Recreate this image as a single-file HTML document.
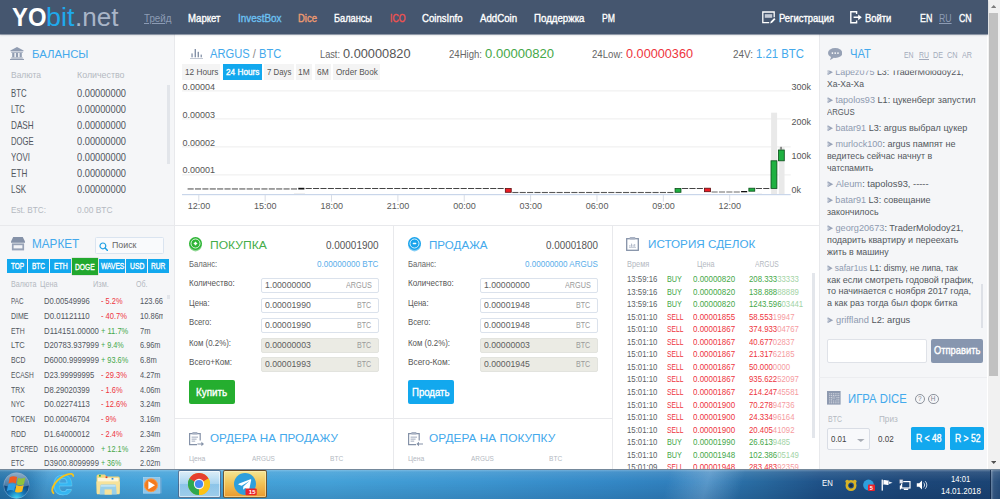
<!DOCTYPE html>
<html lang="ru">
<head>
<meta charset="utf-8">
<title>YObit.net - ARGUS/BTC</title>
<style>
html,body{margin:0;padding:0}
body{width:1000px;height:499px;overflow:hidden;position:relative;background:#fff;font-family:"Liberation Sans",sans-serif}
.t{position:absolute;white-space:nowrap;line-height:1;transform-origin:0 50%;display:block}
.f{opacity:.5}
</style>
</head>
<body>
<header style="position:absolute;left:0;top:0;width:1000px;height:0;z-index:3"><div style="position:absolute;left:0.00px;top:0.00px;width:987.50px;height:34.00px;background:#45566f;box-shadow:0 1px 0 rgba(69,86,111,.5),0 1px 2px rgba(40,50,70,.25);"></div><span class="t" style="left:12.20px;top:5.00px;font-size:25.00px;color:#fff;font-weight:bold;transform:scaleX(0.9522);">YO</span><span class="t" style="left:46.40px;top:5.00px;font-size:25.00px;color:#1fa9ec;transform:scaleX(1.0755);">bit</span><span class="t" style="left:75.20px;top:5.00px;font-size:25.00px;color:#a9b5c8;transform:scaleX(1.0407);">.net</span><nav><span class="t" style="left:143.50px;top:13.00px;font-size:10.60px;color:#8d9cb5;transform:scaleX(0.9239);text-decoration:underline;">Трейд</span><span class="t" style="left:188.00px;top:13.00px;font-size:10.60px;color:#fff;-webkit-text-stroke:.35px #fff;transform:scaleX(0.9059);">Маркет</span><span class="t" style="left:237.50px;top:13.00px;font-size:10.60px;color:#6cc1f3;-webkit-text-stroke:.35px #6cc1f3;transform:scaleX(0.9349);">InvestBox</span><span class="t" style="left:298.00px;top:13.00px;font-size:10.60px;color:#f09b70;-webkit-text-stroke:.35px #f09b70;transform:scaleX(0.8961);">Dice</span><span class="t" style="left:334.00px;top:13.00px;font-size:10.60px;color:#fff;-webkit-text-stroke:.35px #fff;transform:scaleX(0.8698);">Балансы</span><span class="t" style="left:389.50px;top:13.00px;font-size:10.60px;color:#f2524f;-webkit-text-stroke:.35px #f2524f;transform:scaleX(0.8226);">ICO</span><span class="t" style="left:422.00px;top:13.00px;font-size:10.60px;color:#fff;-webkit-text-stroke:.35px #fff;transform:scaleX(0.9047);">CoinsInfo</span><span class="t" style="left:479.50px;top:13.00px;font-size:10.60px;color:#fff;-webkit-text-stroke:.35px #fff;transform:scaleX(0.9104);">AddCoin</span><span class="t" style="left:534.00px;top:13.00px;font-size:10.60px;color:#fff;-webkit-text-stroke:.35px #fff;transform:scaleX(0.9138);">Поддержка</span><span class="t" style="left:601.50px;top:13.00px;font-size:10.60px;color:#fff;-webkit-text-stroke:.35px #fff;transform:scaleX(0.8181);">PM</span></nav><svg style="position:absolute;left:762.00px;top:10.60px;" width="13.60" height="13.20" viewBox="0 0 13.6 13.2"><path d="M12.2 6.2V1H.8v10.6h6.4" fill="none" stroke="#fff" stroke-width="1.3"/><rect x="2.8" y="3.2" width="7.4" height="3.6" fill="#c3cad6"/><path d="M8.2 12.4l.6-2 3.4-3.4 1.3 1.3-3.4 3.4z" fill="#fff"/></svg><span class="t" style="left:778.90px;top:13.00px;font-size:10.60px;color:#fff;-webkit-text-stroke:.35px #fff;transform:scaleX(0.8896);">Регистрация</span><svg style="position:absolute;left:850.40px;top:11.20px;" width="12.00" height="12.60" viewBox="0 0 12 12.6"><path d="M6.6 3V.8H.8v11h5.8V9.6" fill="none" stroke="#fff" stroke-width="1.4"/><path d="M3.6 5.5h4.6V3.4l3.6 2.9-3.6 2.9V7.1H3.6z" fill="#fff"/></svg><span class="t" style="left:865.00px;top:13.00px;font-size:10.60px;color:#fff;-webkit-text-stroke:.35px #fff;transform:scaleX(0.8902);">Войти</span><span class="t" style="left:919.60px;top:13.00px;font-size:10.60px;color:#fff;-webkit-text-stroke:.35px #fff;transform:scaleX(0.8425);">EN</span><span class="t" style="left:939.40px;top:13.00px;font-size:10.60px;color:#8d9cb5;transform:scaleX(0.8229);text-decoration:underline;">RU</span><span class="t" style="left:959.40px;top:13.00px;font-size:10.60px;color:#fff;-webkit-text-stroke:.35px #fff;transform:scaleX(0.8229);">CN</span></header>
<aside><div style="position:absolute;left:0.00px;top:34.20px;width:174.00px;height:436.00px;background:#f5f6f8;border-right:1px solid #e8e9ec;"></div><svg style="position:absolute;left:10.00px;top:47.00px;" width="14.00" height="13.00" viewBox="0 0 14 13"><g fill="#919db2"><path d="M7 0l6.6 3.4v.9H.4v-.9z"/><rect x="1.2" y="4.8" width="11.6" height=".9"/><rect x="2.2" y="6" width="2.2" height="4.2"/><rect x="5.9" y="6" width="2.2" height="4.2"/><rect x="9.6" y="6" width="2.2" height="4.2"/><rect x="1.2" y="10.5" width="11.6" height="1"/><rect x="0" y="11.9" width="14" height="1.1"/></g></svg><section><span class="t" style="left:31.60px;top:48.00px;font-size:11.60px;color:#43a9ec;transform:scaleX(0.9774);">БАЛАНСЫ</span><span class="t" style="left:10.50px;top:71.00px;font-size:9.20px;color:#b4b9c1;transform:scaleX(0.9226);">Валюта</span><span class="t" style="left:76.50px;top:71.00px;font-size:9.20px;color:#b4b9c1;transform:scaleX(0.9626);">Количество</span><span class="t" style="left:10.50px;top:88.00px;font-size:10.60px;color:#52575f;transform:scaleX(0.7316);">BTC</span><span class="t" style="left:76.50px;top:88.00px;font-size:10.60px;color:#52575f;transform:scaleX(0.8752);">0.00000000</span><span class="t" style="left:10.50px;top:104.00px;font-size:10.60px;color:#52575f;transform:scaleX(0.7149);">LTC</span><span class="t" style="left:76.50px;top:104.00px;font-size:10.60px;color:#52575f;transform:scaleX(0.8752);">0.00000000</span><span class="t" style="left:10.50px;top:120.00px;font-size:10.60px;color:#52575f;transform:scaleX(0.7728);">DASH</span><span class="t" style="left:76.50px;top:120.00px;font-size:10.60px;color:#52575f;transform:scaleX(0.8752);">0.00000000</span><span class="t" style="left:10.50px;top:136.00px;font-size:10.60px;color:#52575f;transform:scaleX(0.7291);">DOGE</span><span class="t" style="left:76.50px;top:136.00px;font-size:10.60px;color:#52575f;transform:scaleX(0.8752);">0.00000000</span><span class="t" style="left:10.50px;top:152.00px;font-size:10.60px;color:#52575f;transform:scaleX(0.7502);">YOVI</span><span class="t" style="left:76.50px;top:152.00px;font-size:10.60px;color:#52575f;transform:scaleX(0.8752);">0.00000000</span><span class="t" style="left:10.50px;top:168.00px;font-size:10.60px;color:#52575f;transform:scaleX(0.7670);">ETH</span><span class="t" style="left:76.50px;top:168.00px;font-size:10.60px;color:#52575f;transform:scaleX(0.8752);">0.00000000</span><span class="t" style="left:10.50px;top:184.00px;font-size:10.60px;color:#52575f;transform:scaleX(0.7488);">LSK</span><span class="t" style="left:76.50px;top:184.00px;font-size:10.60px;color:#52575f;transform:scaleX(0.8752);">0.00000000</span><span class="t" style="left:10.50px;top:205.00px;font-size:9.40px;color:#b4b9c1;transform:scaleX(0.8726);">Est. BTC:</span><span class="t" style="left:76.50px;top:205.00px;font-size:9.40px;color:#b4b9c1;transform:scaleX(0.8963);">0.00 BTC</span><div style="position:absolute;left:167.00px;top:84.50px;width:3.00px;height:79.20px;background:#e2e5ea;"></div></section><div style="position:absolute;left:0.00px;top:224.60px;width:174.00px;height:1.00px;background:#e8e9ec;"></div><section><svg style="position:absolute;left:10.50px;top:237.30px;" width="14.00" height="13.40" viewBox="0 0 14 13.4"><path d="M2.2 0h9.6l2.2 4.4v1.4H0V4.4z" fill="#8592a8"/><path d="M.9 6.4h12.2v7H.9z" fill="#97a2b6"/><rect x="2.6" y="8.2" width="8.8" height="3.2" fill="#f3f4f7"/></svg><span class="t" style="left:31.50px;top:239.00px;font-size:11.90px;color:#43a9ec;transform:scaleX(0.9866);">МАРКЕТ</span><div style="position:absolute;left:95.40px;top:237.30px;width:66.40px;height:14.80px;background:#f9fafc;border:1px solid #dae4f0;border-radius:1.5px;"></div><svg style="position:absolute;left:99.00px;top:241.50px;" width="9.40" height="9.40" viewBox="0 0 9.4 9.4"><circle cx="3.9" cy="3.9" r="2.9" fill="none" stroke="#1d9fe3" stroke-width="1.2"/><path d="M6.1 6.1l2.6 2.6" stroke="#1d9fe3" stroke-width="1.5" stroke-linecap="round"/></svg><span class="t" style="left:112.00px;top:241.00px;font-size:9.00px;color:#666;transform:scaleX(0.9818);">Поиск</span><div style="position:absolute;left:6.65px;top:258.90px;width:20.45px;height:14.00px;background:#12a8ee;"></div><span class="t" style="left:10.85px;top:262.00px;font-size:8.50px;color:#fff;-webkit-text-stroke:.35px #fff;transform:scaleX(0.7589);">TOP</span><div style="position:absolute;left:28.00px;top:258.90px;width:21.00px;height:14.00px;background:#12a8ee;"></div><span class="t" style="left:32.40px;top:262.00px;font-size:8.50px;color:#fff;-webkit-text-stroke:.35px #fff;transform:scaleX(0.7529);">BTC</span><div style="position:absolute;left:50.00px;top:258.90px;width:20.90px;height:14.00px;background:#12a8ee;"></div><span class="t" style="left:53.70px;top:262.00px;font-size:8.50px;color:#fff;-webkit-text-stroke:.35px #fff;transform:scaleX(0.8059);">ETH</span><div style="position:absolute;left:98.90px;top:258.90px;width:26.20px;height:14.00px;background:#12a8ee;"></div><span class="t" style="left:100.60px;top:262.00px;font-size:8.50px;color:#fff;-webkit-text-stroke:.35px #fff;transform:scaleX(0.7828);">WAVES</span><div style="position:absolute;left:126.40px;top:258.90px;width:20.60px;height:14.00px;background:#12a8ee;"></div><span class="t" style="left:129.50px;top:262.00px;font-size:8.50px;color:#fff;-webkit-text-stroke:.35px #fff;transform:scaleX(0.8021);">USD</span><div style="position:absolute;left:148.20px;top:258.90px;width:20.70px;height:14.00px;background:#12a8ee;"></div><span class="t" style="left:151.00px;top:262.00px;font-size:8.50px;color:#fff;-webkit-text-stroke:.35px #fff;transform:scaleX(0.7817);">RUR</span><div style="position:absolute;left:71.75px;top:258.40px;width:26.20px;height:16.80px;background:#22a82e;box-shadow:0 0 1px rgba(0,80,0,.5);"></div><span class="t" style="left:75.25px;top:263.00px;font-size:8.50px;color:#fff;-webkit-text-stroke:.35px #fff;transform:scaleX(0.7890);">DOGE</span><span class="t" style="left:10.50px;top:280.00px;font-size:8.30px;color:#b4b9c1;transform:scaleX(0.8651);">Валюта</span><span class="t" style="left:39.90px;top:280.00px;font-size:8.30px;color:#b4b9c1;transform:scaleX(0.8771);">Цена</span><span class="t" style="left:93.10px;top:280.00px;font-size:8.30px;color:#b4b9c1;transform:scaleX(0.8886);">Изм.</span><span class="t" style="left:135.60px;top:280.00px;font-size:8.30px;color:#b4b9c1;transform:scaleX(0.8435);">Об.</span><div style="position:absolute;left:0;top:0;width:162.800px;height:469px;overflow:hidden"><span class="t" style="left:10.50px;top:297.00px;font-size:9.30px;color:#52575f;transform:scaleX(0.6780);">PAC</span><span class="t" style="left:43.75px;top:297.00px;font-size:9.30px;color:#52575f;transform:scaleX(0.8193);">D0.00549996</span><span class="t" style="left:101.00px;top:297.00px;font-size:9.30px;color:#ee3540;transform:scaleX(0.8000);">- 5.2%</span><span class="t" style="left:139.50px;top:297.00px;font-size:9.30px;color:#52575f;transform:scaleX(0.8088);">123.66</span><span class="t" style="left:10.50px;top:312.00px;font-size:9.30px;color:#52575f;transform:scaleX(0.7527);">DIME</span><span class="t" style="left:43.75px;top:312.00px;font-size:9.30px;color:#52575f;transform:scaleX(0.8509);">D0.01121110</span><span class="t" style="left:101.00px;top:312.00px;font-size:9.30px;color:#ee3540;transform:scaleX(0.8113);">- 40.7%</span><span class="t" style="left:139.50px;top:312.00px;font-size:9.30px;color:#52575f;transform:scaleX(0.8093);">10.86m</span><span class="t" style="left:10.50px;top:327.00px;font-size:9.30px;color:#52575f;transform:scaleX(0.7389);">ETH</span><span class="t" style="left:43.75px;top:327.00px;font-size:9.30px;color:#52575f;transform:scaleX(0.8391);">D114151.00000</span><span class="t" style="left:101.00px;top:327.00px;font-size:9.30px;color:#45a848;transform:scaleX(0.8089);">+ 11.7%</span><span class="t" style="left:139.50px;top:327.00px;font-size:9.30px;color:#52575f;transform:scaleX(0.8126);">7m</span><span class="t" style="left:10.50px;top:341.00px;font-size:9.30px;color:#52575f;transform:scaleX(0.8148);">LTC</span><span class="t" style="left:43.75px;top:341.00px;font-size:9.30px;color:#52575f;transform:scaleX(0.8302);">D20783.937999</span><span class="t" style="left:101.00px;top:341.00px;font-size:9.30px;color:#45a848;transform:scaleX(0.7790);">+ 9.4%</span><span class="t" style="left:139.50px;top:341.00px;font-size:9.30px;color:#52575f;transform:scaleX(0.7932);">6.96m</span><span class="t" style="left:10.50px;top:356.00px;font-size:9.30px;color:#52575f;transform:scaleX(0.7383);">BCD</span><span class="t" style="left:43.75px;top:356.00px;font-size:9.30px;color:#52575f;transform:scaleX(0.8302);">D6000.9999999</span><span class="t" style="left:101.00px;top:356.00px;font-size:9.30px;color:#45a848;transform:scaleX(0.7927);">+ 93.6%</span><span class="t" style="left:139.50px;top:356.00px;font-size:9.30px;color:#52575f;transform:scaleX(0.8103);">6.8m</span><span class="t" style="left:10.50px;top:371.00px;font-size:9.30px;color:#52575f;transform:scaleX(0.7102);">ECASH</span><span class="t" style="left:43.75px;top:371.00px;font-size:9.30px;color:#52575f;transform:scaleX(0.8252);">D23.99999995</span><span class="t" style="left:101.00px;top:371.00px;font-size:9.30px;color:#ee3540;transform:scaleX(0.8113);">- 29.3%</span><span class="t" style="left:139.50px;top:371.00px;font-size:9.30px;color:#52575f;transform:scaleX(0.7932);">4.27m</span><span class="t" style="left:10.50px;top:386.00px;font-size:9.30px;color:#52575f;transform:scaleX(0.7389);">TRX</span><span class="t" style="left:43.75px;top:386.00px;font-size:9.30px;color:#52575f;transform:scaleX(0.8193);">D8.29020399</span><span class="t" style="left:101.00px;top:386.00px;font-size:9.30px;color:#ee3540;transform:scaleX(0.8000);">- 1.6%</span><span class="t" style="left:139.50px;top:386.00px;font-size:9.30px;color:#52575f;transform:scaleX(0.7932);">4.06m</span><span class="t" style="left:10.50px;top:400.00px;font-size:9.30px;color:#52575f;transform:scaleX(0.7001);">NYC</span><span class="t" style="left:43.75px;top:400.00px;font-size:9.30px;color:#52575f;transform:scaleX(0.8295);">D0.02274113</span><span class="t" style="left:101.00px;top:400.00px;font-size:9.30px;color:#ee3540;transform:scaleX(0.8113);">- 12.6%</span><span class="t" style="left:139.50px;top:400.00px;font-size:9.30px;color:#52575f;transform:scaleX(0.7932);">3.24m</span><span class="t" style="left:10.50px;top:415.00px;font-size:9.30px;color:#52575f;transform:scaleX(0.7533);">TOKEN</span><span class="t" style="left:43.75px;top:415.00px;font-size:9.30px;color:#52575f;transform:scaleX(0.8193);">D0.00046704</span><span class="t" style="left:101.00px;top:415.00px;font-size:9.30px;color:#ee3540;transform:scaleX(0.7974);">- 9%</span><span class="t" style="left:139.50px;top:415.00px;font-size:9.30px;color:#52575f;transform:scaleX(0.7932);">3.16m</span><span class="t" style="left:10.50px;top:430.00px;font-size:9.30px;color:#52575f;transform:scaleX(0.7442);">RDD</span><span class="t" style="left:43.75px;top:430.00px;font-size:9.30px;color:#52575f;transform:scaleX(0.8193);">D1.64000012</span><span class="t" style="left:101.00px;top:430.00px;font-size:9.30px;color:#ee3540;transform:scaleX(0.8000);">- 2.4%</span><span class="t" style="left:139.50px;top:430.00px;font-size:9.30px;color:#52575f;transform:scaleX(0.7932);">2.34m</span><span class="t" style="left:10.50px;top:445.00px;font-size:9.30px;color:#52575f;transform:scaleX(0.7062);">BTCRED</span><span class="t" style="left:43.75px;top:445.00px;font-size:9.30px;color:#52575f;transform:scaleX(0.8252);">D16.00000000</span><span class="t" style="left:101.00px;top:445.00px;font-size:9.30px;color:#45a848;transform:scaleX(0.7927);">+ 12.1%</span><span class="t" style="left:139.50px;top:445.00px;font-size:9.30px;color:#52575f;transform:scaleX(0.7932);">2.26m</span><span class="t" style="left:10.50px;top:459.00px;font-size:9.30px;color:#52575f;transform:scaleX(0.7120);">ETC</span><span class="t" style="left:43.75px;top:459.00px;font-size:9.30px;color:#52575f;transform:scaleX(0.8302);">D3900.8099999</span><span class="t" style="left:101.00px;top:459.00px;font-size:9.30px;color:#45a848;transform:scaleX(0.7606);">+ 36%</span><span class="t" style="left:139.50px;top:459.00px;font-size:9.30px;color:#52575f;transform:scaleX(0.7932);">2.02m</span></div><div style="position:absolute;left:167.00px;top:294.50px;width:3.00px;height:4.30px;background:#e2e5ea;"></div></section></aside>
<main><section><svg style="position:absolute;left:189.60px;top:48.60px;" width="13.40" height="10.80" viewBox="0 0 13.4 10.8"><g fill="#8592a8"><rect x="1.4" y="4.4" width="1.3" height="3.9"/><rect x="4.6" y="0" width="1.4" height="8.3"/><rect x="7.6" y="2.8" width="1.4" height="5.5"/><rect x="10.6" y="5.6" width="1.3" height="2.7"/><rect x="0" y="9.5" width="13.4" height="1.2"/></g></svg><span class="t" style="left:210.00px;top:49.00px;font-size:11.90px;color:#43a9ec;transform:scaleX(0.9391);"><span style="color:#43a9ec">ARGUS</span> <span style="color:#8f8a88">/</span> <span style="color:#43a9ec">BTC</span></span><span class="t" style="left:320.00px;top:49.00px;font-size:10.60px;color:#666;transform:scaleX(0.8707);">Last:</span><span class="t" style="left:343.00px;top:48.00px;font-size:12.40px;color:#555;transform:scaleX(1.0310);">0.00000820</span><span class="t" style="left:449.00px;top:49.00px;font-size:10.60px;color:#666;transform:scaleX(0.9037);">24High:</span><span class="t" style="left:484.50px;top:48.00px;font-size:12.40px;color:#45a848;transform:scaleX(1.0539);">0.00000820</span><span class="t" style="left:592.00px;top:49.00px;font-size:10.60px;color:#666;transform:scaleX(0.9072);">24Low:</span><span class="t" style="left:626.00px;top:48.00px;font-size:12.40px;color:#ee3540;transform:scaleX(1.0234);">0.00000360</span><span class="t" style="left:732.50px;top:49.00px;font-size:10.60px;color:#666;transform:scaleX(0.9343);">24V:</span><span class="t" style="left:755.50px;top:48.00px;font-size:12.40px;color:#43a9ec;transform:scaleX(0.9170);">1.21 BTC</span><div style="position:absolute;left:182.40px;top:64.00px;width:37.80px;height:15.60px;background:#f4f4f4;"></div><span class="t" style="left:184.80px;top:68.00px;font-size:8.80px;color:#555;transform:scaleX(0.9355);">12 Hours</span><div style="position:absolute;left:223.00px;top:64.00px;width:39.00px;height:15.60px;background:#12a8ee;"></div><span class="t" style="left:226.20px;top:68.00px;font-size:8.80px;color:#fff;-webkit-text-stroke:.35px #fff;transform:scaleX(0.9355);">24 Hours</span><div style="position:absolute;left:264.00px;top:64.00px;width:29.60px;height:15.60px;background:#f4f4f4;"></div><span class="t" style="left:266.60px;top:68.00px;font-size:8.80px;color:#555;transform:scaleX(0.8908);">7 Days</span><div style="position:absolute;left:295.70px;top:64.00px;width:16.50px;height:15.60px;background:#f4f4f4;"></div><span class="t" style="left:298.10px;top:68.00px;font-size:8.80px;color:#555;transform:scaleX(0.9563);">1M</span><div style="position:absolute;left:314.50px;top:64.00px;width:16.50px;height:15.60px;background:#f4f4f4;"></div><span class="t" style="left:316.90px;top:68.00px;font-size:8.80px;color:#555;transform:scaleX(0.9563);">6M</span><div style="position:absolute;left:333.40px;top:64.00px;width:46.60px;height:15.60px;background:#f4f4f4;"></div><span class="t" style="left:335.80px;top:68.00px;font-size:8.80px;color:#555;transform:scaleX(0.9292);">Order Book</span><svg style="position:absolute;left:180.00px;top:84.00px;" width="615.00" height="120.00" viewBox="0 0 615 120"><rect x="2.00" y="6.40" width="608.70" height="1" fill="#ededed"/><rect x="2.00" y="34.40" width="608.70" height="1" fill="#ededed"/><rect x="2.00" y="62.40" width="608.70" height="1" fill="#ededed"/><rect x="2.00" y="90.40" width="608.70" height="1" fill="#ededed"/><rect x="591.10" y="28.70" width="6" height="81.80" fill="#e9e9e9"/><rect x="598.75" y="63.30" width="5.8" height="47.20" fill="#e9e9e9"/><rect x="114.00" y="109.00" width="11" height="1.4" fill="#eeeeee"/><rect x="577.00" y="109.40" width="5" height="1" fill="#eeeeee"/><rect x="2.00" y="110.00" width="608.70" height="1.2" fill="#c9d6ea"/><rect x="18.30" y="111.00" width="1" height="6.6" fill="#d8dde6"/><rect x="84.66" y="111.00" width="1" height="6.6" fill="#d8dde6"/><rect x="151.02" y="111.00" width="1" height="6.6" fill="#d8dde6"/><rect x="217.38" y="111.00" width="1" height="6.6" fill="#d8dde6"/><rect x="283.74" y="111.00" width="1" height="6.6" fill="#d8dde6"/><rect x="350.10" y="111.00" width="1" height="6.6" fill="#d8dde6"/><rect x="416.46" y="111.00" width="1" height="6.6" fill="#d8dde6"/><rect x="482.82" y="111.00" width="1" height="6.6" fill="#d8dde6"/><rect x="549.18" y="111.00" width="1" height="6.6" fill="#d8dde6"/><rect x="317.54" y="104.00" width="6.10" height="1" fill="#444"/><rect x="310.16" y="104.00" width="6.10" height="1" fill="#444"/><rect x="302.78" y="104.00" width="6.10" height="1" fill="#444"/><rect x="295.40" y="104.00" width="6.10" height="1" fill="#444"/><rect x="288.02" y="104.00" width="6.10" height="1" fill="#444"/><rect x="280.64" y="104.00" width="6.10" height="1" fill="#444"/><rect x="273.26" y="104.00" width="6.10" height="1" fill="#444"/><rect x="265.88" y="104.00" width="6.10" height="1" fill="#444"/><rect x="258.50" y="104.00" width="6.10" height="1" fill="#444"/><rect x="251.12" y="104.00" width="6.10" height="1" fill="#444"/><rect x="243.74" y="104.00" width="6.10" height="1" fill="#444"/><rect x="236.36" y="104.00" width="6.10" height="1" fill="#444"/><rect x="228.98" y="104.00" width="6.10" height="1" fill="#444"/><rect x="221.60" y="104.00" width="6.10" height="1" fill="#444"/><rect x="214.22" y="104.00" width="6.10" height="1" fill="#444"/><rect x="206.84" y="104.00" width="6.10" height="1" fill="#444"/><rect x="199.46" y="104.00" width="6.10" height="1" fill="#444"/><rect x="192.08" y="104.00" width="6.10" height="1" fill="#444"/><rect x="184.70" y="104.00" width="6.10" height="1" fill="#444"/><rect x="177.32" y="104.00" width="6.10" height="1" fill="#444"/><rect x="169.94" y="104.00" width="6.10" height="1" fill="#444"/><rect x="162.56" y="104.00" width="6.10" height="1" fill="#444"/><rect x="155.18" y="104.00" width="6.10" height="1" fill="#444"/><rect x="147.80" y="104.00" width="6.10" height="1" fill="#444"/><rect x="140.42" y="104.00" width="6.10" height="1" fill="#444"/><rect x="133.04" y="104.00" width="6.10" height="1" fill="#444"/><rect x="125.66" y="104.00" width="6.10" height="1" fill="#444"/><rect x="110.90" y="104.40" width="6.10" height="1.1" fill="#585858"/><rect x="103.52" y="104.40" width="6.10" height="1.1" fill="#585858"/><rect x="96.14" y="104.40" width="6.10" height="1.1" fill="#585858"/><rect x="88.76" y="104.40" width="6.10" height="1.1" fill="#585858"/><rect x="81.38" y="104.40" width="6.10" height="1.1" fill="#585858"/><rect x="74.00" y="104.40" width="6.10" height="1.1" fill="#585858"/><rect x="66.62" y="104.40" width="6.10" height="1.1" fill="#585858"/><rect x="59.24" y="104.40" width="6.10" height="1.1" fill="#585858"/><rect x="51.86" y="104.40" width="6.10" height="1.1" fill="#585858"/><rect x="44.48" y="104.40" width="6.10" height="1.1" fill="#585858"/><rect x="37.10" y="104.40" width="6.10" height="1.1" fill="#585858"/><rect x="29.72" y="104.40" width="6.10" height="1.1" fill="#585858"/><rect x="22.34" y="104.40" width="6.10" height="1.1" fill="#585858"/><rect x="14.96" y="104.40" width="6.10" height="1.1" fill="#585858"/><rect x="7.58" y="104.40" width="6.10" height="1.1" fill="#585858"/><rect x="118.28" y="103.80" width="6.1" height="1.7" fill="#111"/><rect x="325.32" y="104.50" width="5.90" height="3.80" fill="#ee1c25" stroke="#5a0d10" stroke-width=".8"/><rect x="487.28" y="107.95" width="6.10" height="1.1" fill="#585858"/><rect x="479.90" y="107.95" width="6.10" height="1.1" fill="#585858"/><rect x="472.52" y="107.95" width="6.10" height="1.1" fill="#585858"/><rect x="465.14" y="107.95" width="6.10" height="1.1" fill="#585858"/><rect x="457.76" y="107.95" width="6.10" height="1.1" fill="#585858"/><rect x="450.38" y="107.95" width="6.10" height="1.1" fill="#585858"/><rect x="443.00" y="107.95" width="6.10" height="1.1" fill="#585858"/><rect x="435.62" y="107.95" width="6.10" height="1.1" fill="#585858"/><rect x="428.24" y="107.95" width="6.10" height="1.1" fill="#585858"/><rect x="420.86" y="107.95" width="6.10" height="1.1" fill="#585858"/><rect x="413.48" y="107.95" width="6.10" height="1.1" fill="#585858"/><rect x="406.10" y="107.95" width="6.10" height="1.1" fill="#585858"/><rect x="398.72" y="107.95" width="6.10" height="1.1" fill="#585858"/><rect x="391.34" y="107.95" width="6.10" height="1.1" fill="#585858"/><rect x="383.96" y="107.95" width="6.10" height="1.1" fill="#585858"/><rect x="376.58" y="107.95" width="6.10" height="1.1" fill="#585858"/><rect x="369.20" y="107.95" width="6.10" height="1.1" fill="#585858"/><rect x="361.82" y="107.95" width="6.10" height="1.1" fill="#585858"/><rect x="354.44" y="107.95" width="6.10" height="1.1" fill="#585858"/><rect x="347.06" y="107.95" width="6.10" height="1.1" fill="#585858"/><rect x="339.68" y="107.95" width="6.10" height="1.1" fill="#585858"/><rect x="332.30" y="107.95" width="6.10" height="1.1" fill="#585858"/><rect x="495.06" y="104.50" width="5.90" height="3.80" fill="#1fb141" stroke="#0b4d1a" stroke-width=".8"/><rect x="516.80" y="104.00" width="6.10" height="1" fill="#444"/><rect x="509.42" y="104.00" width="6.10" height="1" fill="#444"/><rect x="502.04" y="104.00" width="6.10" height="1" fill="#444"/><rect x="524.58" y="104.20" width="5.90" height="3.50" fill="#ee1c25" stroke="#5a0d10" stroke-width=".8"/><rect x="553.70" y="107.45" width="6.10" height="1.1" fill="#777"/><rect x="546.32" y="107.45" width="6.10" height="1.1" fill="#777"/><rect x="538.94" y="107.45" width="6.10" height="1.1" fill="#777"/><rect x="531.56" y="107.45" width="6.10" height="1.1" fill="#777"/><rect x="561.08" y="107.00" width="6.1" height="1.3" fill="#111"/><rect x="568.86" y="104.20" width="5.90" height="3.00" fill="#1fb141" stroke="#0b4d1a" stroke-width=".8"/><rect x="583.22" y="104.00" width="6.10" height="1" fill="#444"/><rect x="575.84" y="104.00" width="6.10" height="1" fill="#444"/><rect x="591.00" y="76.80" width="5.90" height="27.60" fill="#1fb141" stroke="#0b4d1a" stroke-width=".8"/><rect x="600.53" y="62.80" width="1" height="2.80" fill="#333"/><rect x="598.38" y="66.00" width="5.90" height="10.80" fill="#1fb141" stroke="#0b4d1a" stroke-width=".8"/></svg><span class="t" style="left:182.50px;top:83.00px;font-size:9.00px;color:#555;">0.00004</span><span class="t" style="left:182.50px;top:111.00px;font-size:9.00px;color:#555;">0.00003</span><span class="t" style="left:182.50px;top:139.00px;font-size:9.00px;color:#555;">0.00002</span><span class="t" style="left:182.50px;top:166.00px;font-size:9.00px;color:#555;">0.00001</span><span class="t" style="left:791.50px;top:83.00px;font-size:9.00px;color:#555;">300k</span><span class="t" style="left:791.50px;top:118.00px;font-size:9.00px;color:#555;">200k</span><span class="t" style="left:791.50px;top:152.00px;font-size:9.00px;color:#555;">100k</span><span class="t" style="left:791.50px;top:186.00px;font-size:9.00px;color:#555;">0k</span><span class="t" style="left:187.70px;top:202.00px;font-size:9.00px;color:#5a5a5a;">12:00</span><span class="t" style="left:254.06px;top:202.00px;font-size:9.00px;color:#5a5a5a;">15:00</span><span class="t" style="left:320.42px;top:202.00px;font-size:9.00px;color:#5a5a5a;">18:00</span><span class="t" style="left:386.78px;top:202.00px;font-size:9.00px;color:#5a5a5a;">21:00</span><span class="t" style="left:453.14px;top:202.00px;font-size:9.00px;color:#5a5a5a;">00:00</span><span class="t" style="left:519.50px;top:202.00px;font-size:9.00px;color:#5a5a5a;">03:00</span><span class="t" style="left:585.86px;top:202.00px;font-size:9.00px;color:#5a5a5a;">06:00</span><span class="t" style="left:652.22px;top:202.00px;font-size:9.00px;color:#5a5a5a;">09:00</span><span class="t" style="left:718.58px;top:202.00px;font-size:9.00px;color:#5a5a5a;">12:00</span></section><div style="position:absolute;left:174.50px;top:224.60px;width:645.00px;height:1.00px;background:#e8e9ec;"></div>
<div style="position:absolute;left:392.50px;top:224.50px;width:1.00px;height:246.00px;background:#e8e9ec;"></div><div style="position:absolute;left:612.00px;top:224.50px;width:1.00px;height:246.00px;background:#e8e9ec;"></div><div style="position:absolute;left:174.50px;top:418.30px;width:438.00px;height:1.00px;background:#e8e9ec;"></div><section><svg style="position:absolute;left:188.80px;top:237.00px;" width="13.00" height="15.00" viewBox="0 0 13 15"><ellipse cx="6.5" cy="8.2" rx="6.2" ry="6.2" fill="#2fb536" opacity=".55"/><circle cx="6.5" cy="6.5" r="6.5" fill="#2fb536"/><circle cx="6.5" cy="6.5" r="4.5" fill="none" stroke="#fff" stroke-width=".9" opacity=".9"/><rect x="4.7" y="5.8" width="3.6" height="1.4" rx=".4" fill="#fff"/><rect x="5.8" y="4.7" width="1.4" height="3.6" rx=".4" fill="#fff"/></svg><span class="t" style="left:210.00px;top:240.00px;font-size:11.80px;color:#45ad49;transform:scaleX(1.0257);">ПОКУПКА</span><span class="t" style="left:326.25px;top:241.00px;font-size:10.40px;color:#555;transform:scaleX(0.9562);">0.00001900</span><span class="t" style="left:316.75px;top:260.00px;font-size:9.00px;color:#5aaeea;transform:scaleX(0.9036);">0.00000000 BTC</span><span class="t" style="left:189.25px;top:260.00px;font-size:9.00px;color:#666;transform:scaleX(0.8524);">Баланс:</span><span class="t" style="left:189.25px;top:279.00px;font-size:9.00px;color:#555;transform:scaleX(0.8998);">Количество:</span><div style="position:absolute;left:261.25px;top:277.50px;width:115.50px;height:13.20px;background:#fff;border:1px solid #dbe2ec;border-radius:2px;"></div><span class="t" style="left:265.00px;top:280.00px;font-size:9.60px;color:#5e5e5e;transform:scaleX(0.9036);">1.00000000</span><span class="t" style="left:345.50px;top:281.00px;font-size:8.60px;color:#9a9a9a;transform:scaleX(0.8425);">ARGUS</span><span class="t" style="left:189.25px;top:299.00px;font-size:9.00px;color:#555;transform:scaleX(0.8492);">Цена:</span><div style="position:absolute;left:261.25px;top:297.50px;width:115.50px;height:13.20px;background:#fff;border:1px solid #dbe2ec;border-radius:2px;"></div><span class="t" style="left:265.00px;top:300.00px;font-size:9.60px;color:#5e5e5e;transform:scaleX(0.9036);">0.00001990</span><span class="t" style="left:357.00px;top:301.00px;font-size:8.60px;color:#9a9a9a;transform:scaleX(0.8291);">BTC</span><span class="t" style="left:189.25px;top:318.00px;font-size:9.00px;color:#555;transform:scaleX(0.8618);">Всего:</span><div style="position:absolute;left:261.25px;top:317.50px;width:115.50px;height:13.20px;background:#fff;border:1px solid #dbe2ec;border-radius:2px;"></div><span class="t" style="left:265.00px;top:320.00px;font-size:9.60px;color:#5e5e5e;transform:scaleX(0.9036);">0.00001990</span><span class="t" style="left:357.00px;top:321.00px;font-size:8.60px;color:#9a9a9a;transform:scaleX(0.8291);">BTC</span><span class="t" style="left:189.25px;top:339.00px;font-size:9.00px;color:#555;transform:scaleX(0.8759);">Ком (0.2%):</span><div style="position:absolute;left:261.25px;top:337.50px;width:115.50px;height:13.20px;background:#ebebe4;border:1px solid #e2e3de;border-radius:2px;"></div><span class="t" style="left:265.00px;top:340.00px;font-size:9.60px;color:#5e5e5e;transform:scaleX(0.9036);">0.00000003</span><span class="t" style="left:357.00px;top:341.00px;font-size:8.60px;color:#9a9a9a;transform:scaleX(0.8291);">BTC</span><span class="t" style="left:189.25px;top:358.00px;font-size:9.00px;color:#555;transform:scaleX(0.8996);">Всего+Ком:</span><div style="position:absolute;left:261.25px;top:357.20px;width:115.50px;height:13.20px;background:#ebebe4;border:1px solid #e2e3de;border-radius:2px;"></div><span class="t" style="left:265.00px;top:359.00px;font-size:9.60px;color:#5e5e5e;transform:scaleX(0.9036);">0.00001993</span><span class="t" style="left:357.00px;top:360.00px;font-size:8.60px;color:#9a9a9a;transform:scaleX(0.8291);">BTC</span><div style="position:absolute;left:188.75px;top:380.00px;width:46.20px;height:23.80px;background:#25ae2f;border-radius:2px;"></div><span class="t" style="left:195.75px;top:388.00px;font-size:10.40px;color:#fff;-webkit-text-stroke:.35px #fff;transform:scaleX(0.9510);">Купить</span><svg style="position:absolute;left:189.00px;top:432.20px;" width="15.00" height="14.40" viewBox="0 0 15 14.4"><g fill="none" stroke="#8592a8" stroke-width="1.2"><path d="M8 12.6H.6V1.6h10.6v7"/></g><rect x="3.4" y="0" width="5" height="2.6" rx=".6" fill="#a9b2c3"/><g fill="#a9b2c3"><rect x="2.6" y="4.6" width="6.4" height="1.1"/><rect x="2.6" y="6.6" width="5" height="1.1"/><rect x="2.6" y="8.6" width="3.6" height="1.1"/></g><path d="M8.4 11.4h4v-1.7l2.6 2.3-2.6 2.3v-1.7h-4z" fill="#8592a8"/></svg><span class="t" style="left:210.00px;top:433.00px;font-size:11.80px;color:#43a9ec;transform:scaleX(0.9883);">ОРДЕРА НА ПРОДАЖУ</span><span class="t" style="left:189.40px;top:455.00px;font-size:8.00px;color:#b4b9c1;transform:scaleX(0.8526);">Цена</span><span class="t" style="left:252.00px;top:455.00px;font-size:8.00px;color:#b4b9c1;transform:scaleX(0.8013);">ARGUS</span><span class="t" style="left:330.00px;top:455.00px;font-size:8.00px;color:#b4b9c1;transform:scaleX(0.8250);">BTC</span></section><section><svg style="position:absolute;left:407.80px;top:237.00px;" width="13.00" height="15.00" viewBox="0 0 13 15"><ellipse cx="6.5" cy="8.2" rx="6.2" ry="6.2" fill="#1ba4ec" opacity=".55"/><circle cx="6.5" cy="6.5" r="6.5" fill="#1ba4ec"/><circle cx="6.5" cy="6.5" r="4.5" fill="none" stroke="#fff" stroke-width=".9" opacity=".9"/><rect x="4.7" y="5.8" width="3.6" height="1.4" rx=".4" fill="#fff"/></svg><span class="t" style="left:429.20px;top:240.00px;font-size:11.80px;color:#43a9ec;transform:scaleX(0.9828);">ПРОДАЖА</span><span class="t" style="left:545.50px;top:241.00px;font-size:10.40px;color:#555;transform:scaleX(0.9471);">0.00001800</span><span class="t" style="left:524.50px;top:260.00px;font-size:9.00px;color:#5aaeea;transform:scaleX(0.8950);">0.00000000 ARGUS</span><span class="t" style="left:408.25px;top:260.00px;font-size:9.00px;color:#666;transform:scaleX(0.8524);">Баланс:</span><span class="t" style="left:408.25px;top:279.00px;font-size:9.00px;color:#555;transform:scaleX(0.8998);">Количество:</span><div style="position:absolute;left:480.25px;top:277.50px;width:115.50px;height:13.20px;background:#fff;border:1px solid #dbe2ec;border-radius:2px;"></div><span class="t" style="left:484.00px;top:280.00px;font-size:9.60px;color:#5e5e5e;transform:scaleX(0.9036);">1.00000000</span><span class="t" style="left:564.50px;top:281.00px;font-size:8.60px;color:#9a9a9a;transform:scaleX(0.8425);">ARGUS</span><span class="t" style="left:408.25px;top:299.00px;font-size:9.00px;color:#555;transform:scaleX(0.8492);">Цена:</span><div style="position:absolute;left:480.25px;top:297.50px;width:115.50px;height:13.20px;background:#fff;border:1px solid #dbe2ec;border-radius:2px;"></div><span class="t" style="left:484.00px;top:300.00px;font-size:9.60px;color:#5e5e5e;transform:scaleX(0.9036);">0.00001948</span><span class="t" style="left:576.00px;top:301.00px;font-size:8.60px;color:#9a9a9a;transform:scaleX(0.8291);">BTC</span><span class="t" style="left:408.25px;top:318.00px;font-size:9.00px;color:#555;transform:scaleX(0.8618);">Всего:</span><div style="position:absolute;left:480.25px;top:317.50px;width:115.50px;height:13.20px;background:#fff;border:1px solid #dbe2ec;border-radius:2px;"></div><span class="t" style="left:484.00px;top:320.00px;font-size:9.60px;color:#5e5e5e;transform:scaleX(0.9036);">0.00001948</span><span class="t" style="left:576.00px;top:321.00px;font-size:8.60px;color:#9a9a9a;transform:scaleX(0.8291);">BTC</span><span class="t" style="left:408.25px;top:339.00px;font-size:9.00px;color:#555;transform:scaleX(0.8759);">Ком (0.2%):</span><div style="position:absolute;left:480.25px;top:337.50px;width:115.50px;height:13.20px;background:#ebebe4;border:1px solid #e2e3de;border-radius:2px;"></div><span class="t" style="left:484.00px;top:340.00px;font-size:9.60px;color:#5e5e5e;transform:scaleX(0.9036);">0.00000003</span><span class="t" style="left:576.00px;top:341.00px;font-size:8.60px;color:#9a9a9a;transform:scaleX(0.8291);">BTC</span><span class="t" style="left:408.25px;top:358.00px;font-size:9.00px;color:#555;transform:scaleX(0.9221);">Всего-Ком:</span><div style="position:absolute;left:480.25px;top:357.20px;width:115.50px;height:13.20px;background:#ebebe4;border:1px solid #e2e3de;border-radius:2px;"></div><span class="t" style="left:484.00px;top:359.00px;font-size:9.60px;color:#5e5e5e;transform:scaleX(0.9036);">0.00001945</span><span class="t" style="left:576.00px;top:360.00px;font-size:8.60px;color:#9a9a9a;transform:scaleX(0.8291);">BTC</span><div style="position:absolute;left:407.75px;top:380.00px;width:46.20px;height:23.80px;background:#12a8ee;border-radius:2px;"></div><span class="t" style="left:412.40px;top:388.00px;font-size:10.40px;color:#fff;-webkit-text-stroke:.35px #fff;transform:scaleX(0.9238);">Продать</span><svg style="position:absolute;left:408.00px;top:432.20px;" width="15.00" height="14.40" viewBox="0 0 15 14.4"><g fill="none" stroke="#8592a8" stroke-width="1.2"><path d="M8 12.6H.6V1.6h10.6v7"/></g><rect x="3.4" y="0" width="5" height="2.6" rx=".6" fill="#a9b2c3"/><g fill="#a9b2c3"><rect x="2.6" y="4.6" width="6.4" height="1.1"/><rect x="2.6" y="6.6" width="5" height="1.1"/><rect x="2.6" y="8.6" width="3.6" height="1.1"/></g><path d="M15 11.4h-4v-1.7L8.4 12l2.6 2.3v-1.7h4z" fill="#8592a8"/></svg><span class="t" style="left:429.00px;top:433.00px;font-size:11.80px;color:#43a9ec;transform:scaleX(1.0085);">ОРДЕРА НА ПОКУПКУ</span><span class="t" style="left:408.40px;top:455.00px;font-size:8.00px;color:#b4b9c1;transform:scaleX(0.8526);">Цена</span><span class="t" style="left:471.00px;top:455.00px;font-size:8.00px;color:#b4b9c1;transform:scaleX(0.8013);">ARGUS</span><span class="t" style="left:549.00px;top:455.00px;font-size:8.00px;color:#b4b9c1;transform:scaleX(0.8250);">BTC</span></section><section><svg style="position:absolute;left:626.20px;top:236.80px;" width="13.00" height="14.00" viewBox="0 0 13 14"><rect x=".7" y="1.7" width="11.6" height="11.6" fill="none" stroke="#8592a8" stroke-width="1.3"/><rect x="3.6" y="0" width="5.8" height="2.4" rx=".8" fill="#a9b2c3"/><g fill="#b4bccb"><rect x="3.4" y="8" width="1" height="1.8"/><rect x="5" y="6.6" width="1" height="3.2"/><rect x="6.6" y="7.6" width="1" height="2.2"/><rect x="8.2" y="7" width="1" height="2.8"/><rect x="3" y="10.2" width="7" height=".7"/></g></svg><span class="t" style="left:648.00px;top:239.00px;font-size:11.80px;color:#43a9ec;transform:scaleX(0.9897);">ИСТОРИЯ СДЕЛОК</span><span class="t" style="left:627.00px;top:260.00px;font-size:8.30px;color:#b4b9c1;transform:scaleX(0.8891);">Время</span><span class="t" style="left:697.20px;top:260.00px;font-size:8.30px;color:#b4b9c1;transform:scaleX(0.8771);">Цена</span><span class="t" style="left:755.40px;top:260.00px;font-size:8.30px;color:#b4b9c1;transform:scaleX(0.8064);">ARGUS</span><span class="t" style="left:626.80px;top:275.00px;font-size:8.80px;color:#5c5f66;transform:scaleX(0.8847);">13:59:16</span><span class="t" style="left:666.70px;top:275.00px;font-size:8.80px;color:#45a848;transform:scaleX(0.8180);">BUY</span><span class="t" style="left:693.20px;top:275.00px;font-size:8.80px;color:#45a848;transform:scaleX(0.9057);">0.00000820</span><span class="t" style="left:748.90px;top:275.00px;font-size:8.80px;color:#45a848;transform:scaleX(0.8848);">208.333<span class="f">33333</span></span><span class="t" style="left:626.80px;top:288.00px;font-size:8.80px;color:#5c5f66;transform:scaleX(0.8847);">13:59:16</span><span class="t" style="left:666.70px;top:288.00px;font-size:8.80px;color:#45a848;transform:scaleX(0.8180);">BUY</span><span class="t" style="left:693.20px;top:288.00px;font-size:8.80px;color:#45a848;transform:scaleX(0.9057);">0.00000820</span><span class="t" style="left:748.90px;top:288.00px;font-size:8.80px;color:#45a848;transform:scaleX(0.8848);">138.888<span class="f">88889</span></span><span class="t" style="left:626.80px;top:300.00px;font-size:8.80px;color:#5c5f66;transform:scaleX(0.8847);">13:59:16</span><span class="t" style="left:666.70px;top:300.00px;font-size:8.80px;color:#45a848;transform:scaleX(0.8180);">BUY</span><span class="t" style="left:693.20px;top:300.00px;font-size:8.80px;color:#45a848;transform:scaleX(0.9057);">0.00000820</span><span class="t" style="left:748.90px;top:300.00px;font-size:8.80px;color:#45a848;transform:scaleX(0.8849);">1243.596<span class="f">03441</span></span><span class="t" style="left:626.80px;top:313.00px;font-size:8.80px;color:#5c5f66;transform:scaleX(0.8847);">15:01:10</span><span class="t" style="left:666.70px;top:313.00px;font-size:8.80px;color:#ee3540;transform:scaleX(0.7663);">SELL</span><span class="t" style="left:693.20px;top:313.00px;font-size:8.80px;color:#ee3540;transform:scaleX(0.9057);">0.00001855</span><span class="t" style="left:748.90px;top:313.00px;font-size:8.80px;color:#ee3540;transform:scaleX(0.8851);">58.553<span class="f">19947</span></span><span class="t" style="left:626.80px;top:325.00px;font-size:8.80px;color:#5c5f66;transform:scaleX(0.8847);">15:01:10</span><span class="t" style="left:666.70px;top:325.00px;font-size:8.80px;color:#ee3540;transform:scaleX(0.7663);">SELL</span><span class="t" style="left:693.20px;top:325.00px;font-size:8.80px;color:#ee3540;transform:scaleX(0.9057);">0.00001867</span><span class="t" style="left:748.90px;top:325.00px;font-size:8.80px;color:#ee3540;transform:scaleX(0.8848);">374.933<span class="f">04767</span></span><span class="t" style="left:626.80px;top:338.00px;font-size:8.80px;color:#5c5f66;transform:scaleX(0.8847);">15:01:10</span><span class="t" style="left:666.70px;top:338.00px;font-size:8.80px;color:#ee3540;transform:scaleX(0.7663);">SELL</span><span class="t" style="left:693.20px;top:338.00px;font-size:8.80px;color:#ee3540;transform:scaleX(0.9057);">0.00001867</span><span class="t" style="left:748.90px;top:338.00px;font-size:8.80px;color:#ee3540;transform:scaleX(0.8851);">40.677<span class="f">02837</span></span><span class="t" style="left:626.80px;top:350.00px;font-size:8.80px;color:#5c5f66;transform:scaleX(0.8847);">15:01:10</span><span class="t" style="left:666.70px;top:350.00px;font-size:8.80px;color:#ee3540;transform:scaleX(0.7663);">SELL</span><span class="t" style="left:693.20px;top:350.00px;font-size:8.80px;color:#ee3540;transform:scaleX(0.9057);">0.00001867</span><span class="t" style="left:748.90px;top:350.00px;font-size:8.80px;color:#ee3540;transform:scaleX(0.8851);">21.317<span class="f">62185</span></span><span class="t" style="left:626.80px;top:363.00px;font-size:8.80px;color:#5c5f66;transform:scaleX(0.8847);">15:01:10</span><span class="t" style="left:666.70px;top:363.00px;font-size:8.80px;color:#ee3540;transform:scaleX(0.7663);">SELL</span><span class="t" style="left:693.20px;top:363.00px;font-size:8.80px;color:#ee3540;transform:scaleX(0.9057);">0.00001867</span><span class="t" style="left:748.90px;top:363.00px;font-size:8.80px;color:#ee3540;transform:scaleX(0.8850);">50.000<span class="f">0000</span></span><span class="t" style="left:626.80px;top:375.00px;font-size:8.80px;color:#5c5f66;transform:scaleX(0.8847);">15:01:10</span><span class="t" style="left:666.70px;top:375.00px;font-size:8.80px;color:#ee3540;transform:scaleX(0.7663);">SELL</span><span class="t" style="left:693.20px;top:375.00px;font-size:8.80px;color:#ee3540;transform:scaleX(0.9057);">0.00001867</span><span class="t" style="left:748.90px;top:375.00px;font-size:8.80px;color:#ee3540;transform:scaleX(0.8848);">935.622<span class="f">52097</span></span><span class="t" style="left:626.80px;top:388.00px;font-size:8.80px;color:#5c5f66;transform:scaleX(0.8847);">15:01:10</span><span class="t" style="left:666.70px;top:388.00px;font-size:8.80px;color:#ee3540;transform:scaleX(0.7663);">SELL</span><span class="t" style="left:693.20px;top:388.00px;font-size:8.80px;color:#ee3540;transform:scaleX(0.9057);">0.00001867</span><span class="t" style="left:748.90px;top:388.00px;font-size:8.80px;color:#ee3540;transform:scaleX(0.8848);">214.247<span class="f">45581</span></span><span class="t" style="left:626.80px;top:401.00px;font-size:8.80px;color:#5c5f66;transform:scaleX(0.8847);">15:01:10</span><span class="t" style="left:666.70px;top:401.00px;font-size:8.80px;color:#ee3540;transform:scaleX(0.7663);">SELL</span><span class="t" style="left:693.20px;top:401.00px;font-size:8.80px;color:#ee3540;transform:scaleX(0.9057);">0.00001900</span><span class="t" style="left:748.90px;top:401.00px;font-size:8.80px;color:#ee3540;transform:scaleX(0.8851);">70.278<span class="f">94736</span></span><span class="t" style="left:626.80px;top:413.00px;font-size:8.80px;color:#5c5f66;transform:scaleX(0.8847);">15:01:10</span><span class="t" style="left:666.70px;top:413.00px;font-size:8.80px;color:#ee3540;transform:scaleX(0.7663);">SELL</span><span class="t" style="left:693.20px;top:413.00px;font-size:8.80px;color:#ee3540;transform:scaleX(0.9057);">0.00001900</span><span class="t" style="left:748.90px;top:413.00px;font-size:8.80px;color:#ee3540;transform:scaleX(0.8851);">24.334<span class="f">96164</span></span><span class="t" style="left:626.80px;top:426.00px;font-size:8.80px;color:#5c5f66;transform:scaleX(0.8847);">15:01:10</span><span class="t" style="left:666.70px;top:426.00px;font-size:8.80px;color:#ee3540;transform:scaleX(0.7663);">SELL</span><span class="t" style="left:693.20px;top:426.00px;font-size:8.80px;color:#ee3540;transform:scaleX(0.9057);">0.00001900</span><span class="t" style="left:748.90px;top:426.00px;font-size:8.80px;color:#ee3540;transform:scaleX(0.8851);">20.405<span class="f">41092</span></span><span class="t" style="left:626.80px;top:438.00px;font-size:8.80px;color:#5c5f66;transform:scaleX(0.8847);">15:01:10</span><span class="t" style="left:666.70px;top:438.00px;font-size:8.80px;color:#45a848;transform:scaleX(0.8180);">BUY</span><span class="t" style="left:693.20px;top:438.00px;font-size:8.80px;color:#45a848;transform:scaleX(0.9057);">0.00001990</span><span class="t" style="left:748.90px;top:438.00px;font-size:8.80px;color:#45a848;transform:scaleX(0.8850);">26.613<span class="f">9485</span></span><span class="t" style="left:626.80px;top:451.00px;font-size:8.80px;color:#5c5f66;transform:scaleX(0.8847);">15:01:10</span><span class="t" style="left:666.70px;top:451.00px;font-size:8.80px;color:#45a848;transform:scaleX(0.8180);">BUY</span><span class="t" style="left:693.20px;top:451.00px;font-size:8.80px;color:#45a848;transform:scaleX(0.9057);">0.00001948</span><span class="t" style="left:748.90px;top:451.00px;font-size:8.80px;color:#45a848;transform:scaleX(0.8848);">102.386<span class="f">05149</span></span><span class="t" style="left:626.80px;top:463.00px;font-size:8.80px;color:#5c5f66;transform:scaleX(0.8847);">15:01:09</span><span class="t" style="left:666.70px;top:463.00px;font-size:8.80px;color:#ee3540;transform:scaleX(0.7663);">SELL</span><span class="t" style="left:693.20px;top:463.00px;font-size:8.80px;color:#ee3540;transform:scaleX(0.9057);">0.00001948</span><span class="t" style="left:748.90px;top:463.00px;font-size:8.80px;color:#ee3540;transform:scaleX(0.8848);">283.483<span class="f">92359</span></span><div style="position:absolute;left:812.00px;top:273.40px;width:3.00px;height:164.30px;background:#e3e6eb;"></div></section></main>
<aside><div style="position:absolute;left:819.40px;top:34.20px;width:168.10px;height:436.00px;background:#f5f6f8;border-left:1px solid #e8e9ec;box-sizing:border-box;"></div><section><svg style="position:absolute;left:827.60px;top:48.00px;" width="14.40" height="12.40" viewBox="0 0 14.4 12.4"><ellipse cx="7.200" cy="5" rx="7.200" ry="5" fill="#97a2b6"/><path d="M3.200 8.600L2 12.200l4.200-2.600z" fill="#97a2b6"/><g fill="#fff"><circle cx="4.400" cy="5.100" r=".85"/><circle cx="7.200" cy="5.100" r=".85"/><circle cx="10" cy="5.100" r=".85"/></g></svg><span class="t" style="left:850.00px;top:49.00px;font-size:11.90px;color:#43a9ec;transform:scaleX(0.9458);">ЧАТ</span><span class="t" style="left:904.40px;top:51.00px;font-size:8.30px;color:#a3abbb;transform:scaleX(0.8325);">EN</span><span class="t" style="left:919.00px;top:51.00px;font-size:8.30px;color:#a3abbb;transform:scaleX(0.8344);text-decoration:underline;">RU</span><span class="t" style="left:933.00px;top:51.00px;font-size:8.30px;color:#a3abbb;transform:scaleX(0.8672);">DE</span><span class="t" style="left:947.40px;top:51.00px;font-size:8.30px;color:#a3abbb;transform:scaleX(0.8845);">CN</span><span class="t" style="left:962.00px;top:51.00px;font-size:8.30px;color:#a3abbb;transform:scaleX(0.8672);">AR</span><div style="position:absolute;left:0;top:0;width:1000px;height:499px;clip-path:inset(70.600px 0 0 0)"><span class="t" style="left:827.40px;top:68.00px;font-size:9.30px;color:#52565d;transform:scaleX(0.9588);"><svg width="6.6" height="6.4" viewBox="0 0 6.600 6.400" style="display:inline-block;vertical-align:-0.3px;margin-right:2px"><path d="M.8 .3l5.400 2.900L.8 6.100z" fill="#98a3b8"/><path d="M0 .3l3 2.900-3 2.900V4.700l1.500-1.500L0 1.700z" fill="#c3cad6"/></svg><span style="color:#8e9ab0">Lapez075</span> L3: TraderMolodoy21,</span><span class="t" style="left:827.40px;top:80.00px;font-size:9.30px;color:#52565d;transform:scaleX(0.9178);">Ха-Ха-Ха</span><span class="t" style="left:827.40px;top:96.00px;font-size:9.30px;color:#52565d;transform:scaleX(0.9806);"><svg width="6.6" height="6.4" viewBox="0 0 6.600 6.400" style="display:inline-block;vertical-align:-0.3px;margin-right:2px"><path d="M.8 .3l5.400 2.900L.8 6.100z" fill="#98a3b8"/><path d="M0 .3l3 2.900-3 2.900V4.700l1.500-1.500L0 1.700z" fill="#c3cad6"/></svg><span style="color:#8e9ab0">tapolos93</span> L1: цукенберг запустил</span><span class="t" style="left:827.40px;top:108.00px;font-size:9.30px;color:#52565d;transform:scaleX(0.8348);">ARGUS</span><span class="t" style="left:827.40px;top:124.00px;font-size:9.30px;color:#52565d;transform:scaleX(0.9753);"><svg width="6.6" height="6.4" viewBox="0 0 6.600 6.400" style="display:inline-block;vertical-align:-0.3px;margin-right:2px"><path d="M.8 .3l5.400 2.900L.8 6.100z" fill="#98a3b8"/><path d="M0 .3l3 2.900-3 2.900V4.700l1.500-1.500L0 1.700z" fill="#c3cad6"/></svg><span style="color:#8e9ab0">batar91</span> L3: argus выбрал цукер</span><span class="t" style="left:827.40px;top:140.00px;font-size:9.30px;color:#52565d;transform:scaleX(0.9781);"><svg width="6.6" height="6.4" viewBox="0 0 6.600 6.400" style="display:inline-block;vertical-align:-0.3px;margin-right:2px"><path d="M.8 .3l5.400 2.900L.8 6.100z" fill="#98a3b8"/><path d="M0 .3l3 2.900-3 2.900V4.700l1.500-1.500L0 1.700z" fill="#c3cad6"/></svg><span style="color:#8e9ab0">murlock100</span>: argus пампят не</span><span class="t" style="left:827.40px;top:152.00px;font-size:9.30px;color:#52565d;transform:scaleX(0.9512);">ведитесь сейчас начнут в</span><span class="t" style="left:827.40px;top:164.00px;font-size:9.30px;color:#52565d;transform:scaleX(0.9351);">чатспамить</span><span class="t" style="left:827.40px;top:180.00px;font-size:9.30px;color:#52565d;transform:scaleX(1.0050);"><svg width="6.6" height="6.4" viewBox="0 0 6.600 6.400" style="display:inline-block;vertical-align:-0.3px;margin-right:2px"><path d="M.8 .3l5.400 2.900L.8 6.100z" fill="#98a3b8"/><path d="M0 .3l3 2.900-3 2.900V4.700l1.500-1.500L0 1.700z" fill="#c3cad6"/></svg><span style="color:#8e9ab0">Aleum</span>: tapolos93, -----</span><span class="t" style="left:827.40px;top:196.00px;font-size:9.30px;color:#52565d;transform:scaleX(0.9729);"><svg width="6.6" height="6.4" viewBox="0 0 6.600 6.400" style="display:inline-block;vertical-align:-0.3px;margin-right:2px"><path d="M.8 .3l5.400 2.900L.8 6.100z" fill="#98a3b8"/><path d="M0 .3l3 2.900-3 2.900V4.700l1.500-1.500L0 1.700z" fill="#c3cad6"/></svg><span style="color:#8e9ab0">batar91</span> L3: совещание</span><span class="t" style="left:827.40px;top:208.00px;font-size:9.30px;color:#52565d;transform:scaleX(0.9531);">закончилось</span><span class="t" style="left:827.40px;top:224.00px;font-size:9.30px;color:#52565d;transform:scaleX(0.9859);"><svg width="6.6" height="6.4" viewBox="0 0 6.600 6.400" style="display:inline-block;vertical-align:-0.3px;margin-right:2px"><path d="M.8 .3l5.400 2.900L.8 6.100z" fill="#98a3b8"/><path d="M0 .3l3 2.900-3 2.900V4.700l1.500-1.500L0 1.700z" fill="#c3cad6"/></svg><span style="color:#8e9ab0">georg20673</span>: TraderMolodoy21,</span><span class="t" style="left:827.40px;top:236.00px;font-size:9.30px;color:#52565d;transform:scaleX(0.9723);">подарить квартиру и переехать</span><span class="t" style="left:827.40px;top:248.00px;font-size:9.30px;color:#52565d;transform:scaleX(0.9532);">жить в машину</span><span class="t" style="left:827.40px;top:264.00px;font-size:9.30px;color:#52565d;transform:scaleX(0.9108);"><svg width="6.6" height="6.4" viewBox="0 0 6.600 6.400" style="display:inline-block;vertical-align:-0.3px;margin-right:2px"><path d="M.8 .3l5.400 2.900L.8 6.100z" fill="#98a3b8"/><path d="M0 .3l3 2.900-3 2.900V4.700l1.500-1.500L0 1.700z" fill="#c3cad6"/></svg><span style="color:#8e9ab0">safar1us</span> L1: dismy, не липа, так</span><span class="t" style="left:827.40px;top:276.00px;font-size:9.30px;color:#52565d;transform:scaleX(0.9718);">как если смотреть годовой график,</span><span class="t" style="left:827.40px;top:287.00px;font-size:9.30px;color:#52565d;transform:scaleX(0.9677);">то начинается с ноября 2017 года,</span><span class="t" style="left:827.40px;top:299.00px;font-size:9.30px;color:#52565d;transform:scaleX(0.9654);">а как раз тогда был форк битка</span><span class="t" style="left:827.40px;top:316.00px;font-size:9.30px;color:#52565d;"><svg width="6.6" height="6.4" viewBox="0 0 6.600 6.400" style="display:inline-block;vertical-align:-0.3px;margin-right:2px"><path d="M.8 .3l5.400 2.900L.8 6.100z" fill="#98a3b8"/><path d="M0 .3l3 2.900-3 2.900V4.700l1.500-1.500L0 1.700z" fill="#c3cad6"/></svg><span style="color:#8e9ab0">griffland</span> L2: argus</span></div><div style="position:absolute;left:980.60px;top:284.00px;width:2.80px;height:44.40px;background:#dde0e6;"></div><div style="position:absolute;left:827.40px;top:339.00px;width:98.00px;height:21.70px;background:#fff;border:1px solid #dfe2e8;border-radius:2px;"></div><div style="position:absolute;left:931.20px;top:339.00px;width:51.70px;height:23.70px;background:#8796af;border-radius:2px;"></div><span class="t" style="left:934.30px;top:346.00px;font-size:10.00px;color:#fff;-webkit-text-stroke:.35px #fff;transform:scaleX(0.9336);">Отправить</span></section><div style="position:absolute;left:819.40px;top:377.20px;width:168.10px;height:1.00px;background:#ecedf0;"></div><section><svg style="position:absolute;left:827.10px;top:391.00px;" width="13.60" height="13.60" viewBox="0 0 13.6 13.6"><rect width="13.6" height="13.6" fill="#8e9ab0"/><rect x="2.3" y="2.3" width="1" height="1" fill="#f5f6f8" opacity=".75"/><rect x="2.3" y="4.1" width="1" height="1" fill="#f5f6f8" opacity=".75"/><rect x="2.3" y="5.9" width="1" height="1" fill="#f5f6f8" opacity=".75"/><rect x="2.3" y="7.7" width="1" height="1" fill="#f5f6f8" opacity=".75"/><rect x="2.3" y="9.5" width="1" height="1" fill="#f5f6f8" opacity=".75"/><rect x="2.3" y="11.3" width="1" height="1" fill="#f5f6f8" opacity=".75"/><rect x="4.1" y="2.3" width="1" height="1" fill="#f5f6f8" opacity=".75"/><rect x="4.1" y="4.1" width="1" height="1" fill="#f5f6f8" opacity=".75"/><rect x="4.1" y="5.9" width="1" height="1" fill="#f5f6f8" opacity=".75"/><rect x="4.1" y="7.7" width="1" height="1" fill="#f5f6f8" opacity=".75"/><rect x="4.1" y="9.5" width="1" height="1" fill="#f5f6f8" opacity=".75"/><rect x="4.1" y="11.3" width="1" height="1" fill="#f5f6f8" opacity=".75"/><rect x="5.9" y="2.3" width="1" height="1" fill="#f5f6f8" opacity=".75"/><rect x="5.9" y="4.1" width="1" height="1" fill="#f5f6f8" opacity=".75"/><rect x="5.9" y="9.5" width="1" height="1" fill="#f5f6f8" opacity=".75"/><rect x="5.9" y="11.3" width="1" height="1" fill="#f5f6f8" opacity=".75"/><rect x="7.7" y="2.3" width="1" height="1" fill="#f5f6f8" opacity=".75"/><rect x="7.7" y="4.1" width="1" height="1" fill="#f5f6f8" opacity=".75"/><rect x="7.7" y="9.5" width="1" height="1" fill="#f5f6f8" opacity=".75"/><rect x="7.7" y="11.3" width="1" height="1" fill="#f5f6f8" opacity=".75"/><rect x="9.5" y="2.3" width="1" height="1" fill="#f5f6f8" opacity=".75"/><rect x="9.5" y="4.1" width="1" height="1" fill="#f5f6f8" opacity=".75"/><rect x="9.5" y="5.9" width="1" height="1" fill="#f5f6f8" opacity=".75"/><rect x="9.5" y="7.7" width="1" height="1" fill="#f5f6f8" opacity=".75"/><rect x="9.5" y="9.5" width="1" height="1" fill="#f5f6f8" opacity=".75"/><rect x="9.5" y="11.3" width="1" height="1" fill="#f5f6f8" opacity=".75"/><rect x="11.3" y="2.3" width="1" height="1" fill="#f5f6f8" opacity=".75"/><rect x="11.3" y="4.1" width="1" height="1" fill="#f5f6f8" opacity=".75"/><rect x="11.3" y="5.9" width="1" height="1" fill="#f5f6f8" opacity=".75"/><rect x="11.3" y="7.7" width="1" height="1" fill="#f5f6f8" opacity=".75"/><rect x="11.3" y="9.5" width="1" height="1" fill="#f5f6f8" opacity=".75"/><rect x="11.3" y="11.3" width="1" height="1" fill="#f5f6f8" opacity=".75"/><rect x="5.200" y="5.200" width="3.200" height="3.200" fill="#a9b2c3"/></svg><span class="t" style="left:848.40px;top:394.00px;font-size:11.90px;color:#43a9ec;transform:scaleX(0.9520);">ИГРА DICE</span><div style="position:absolute;left:915.25px;top:393.70px;width:8.20px;height:8.20px;border:.7px solid #8d939d;border-radius:50%;"></div><span class="t" style="left:917.95px;top:396.00px;font-size:6.40px;color:#7d838d;">?</span><div style="position:absolute;left:928.45px;top:393.70px;width:8.20px;height:8.20px;border:.7px solid #8d939d;border-radius:50%;"></div><span class="t" style="left:930.75px;top:396.00px;font-size:6.40px;color:#7d838d;">H</span><span class="t" style="left:828.20px;top:415.00px;font-size:8.40px;color:#b4b9c1;transform:scaleX(0.8299);">BTC</span><span class="t" style="left:878.70px;top:415.00px;font-size:8.40px;color:#b4b9c1;transform:scaleX(0.9738);">Приз</span><div style="position:absolute;left:827.10px;top:427.60px;width:40.50px;height:20.90px;background:#f8f9fb;border:1px solid #d9dde5;border-radius:2px;"></div><span class="t" style="left:831.00px;top:435.00px;font-size:9.20px;color:#444;transform:scaleX(0.8608);">0.01</span><svg style="position:absolute;left:857.40px;top:438.60px;" width="7.60" height="3.00" viewBox="0 0 7.600 3"><path d="M0 0h7.600L3.800 3z" fill="#a9adb5"/></svg><span class="t" style="left:878.30px;top:435.00px;font-size:9.20px;color:#444;transform:scaleX(0.8776);">0.02</span><div style="position:absolute;left:911.00px;top:427.10px;width:33.60px;height:22.90px;background:#12a8ee;border-radius:1.5px;"></div><span class="t" style="left:915.50px;top:434.00px;font-size:10.00px;color:#fff;-webkit-text-stroke:.35px #fff;transform:scaleX(0.8571);">R &lt; 48</span><div style="position:absolute;left:950.00px;top:427.10px;width:33.70px;height:22.90px;background:#12a8ee;border-radius:1.5px;"></div><span class="t" style="left:954.60px;top:434.00px;font-size:10.00px;color:#fff;-webkit-text-stroke:.35px #fff;transform:scaleX(0.8605);">R &gt; 52</span></section></aside>
<div style="position:absolute;left:987.50px;top:0.00px;width:12.50px;height:470.00px;background:#f1f1f1;"></div><div style="position:absolute;left:989.30px;top:12.65px;width:9.00px;height:363.15px;background:#c1c1c1;"></div><svg style="position:absolute;left:991.00px;top:5.20px;" width="5.40" height="3.00" viewBox="0 0 5.4 3"><path d="M0 3L2.700 0l2.700 3z" fill="#7d7d7d"/></svg><svg style="position:absolute;left:991.00px;top:461.00px;" width="5.40" height="3.00" viewBox="0 0 5.4 3"><path d="M0 0l2.700 3L5.400 0z" fill="#505050"/></svg>
<footer><div style="position:absolute;left:0.00px;top:468.80px;width:1000.00px;height:30.20px;background:linear-gradient(180deg,rgba(255,255,255,.30) 0,rgba(255,255,255,.10) 2px,rgba(255,255,255,0) 40%,rgba(0,10,40,.12) 100%),linear-gradient(105deg,rgba(255,255,255,0) 66.5%,rgba(190,225,255,.30) 70.5%,rgba(255,255,255,0) 74%),linear-gradient(105deg,rgba(255,255,255,0) 3%,rgba(190,225,255,.12) 5%,rgba(255,255,255,0) 7%),linear-gradient(90deg,#2473aa 0,#2878b0 2.5%,#3f9fd8 6%,#45a3da 16%,#44a1d8 33%,#3c95d0 48%,#3489c7 60%,#2f7ebb 69%,#28699f 76%,#1f5288 82%,#1c4779 90%,#1b4474 100%);border-top:1px solid #74889b;box-sizing:border-box;"></div><svg style="position:absolute;left:3.00px;top:471.60px;" width="27.00" height="27.00" viewBox="0 0 27 27"><defs><radialGradient id="ob" cx="50%" cy="100%" r="75%"><stop offset="0" stop-color="#3ddcfb"/><stop offset=".45" stop-color="#1673b4"/><stop offset="1" stop-color="#0c3364"/></radialGradient><linearGradient id="ot" x1="0" y1="0" x2="0" y2="1"><stop offset="0" stop-color="#b4cfe2"/><stop offset="1" stop-color="#4c82ae"/></linearGradient></defs><circle cx="13.500" cy="13.500" r="13" fill="url(#ob)"/><path d="M.5 13.500a13 13 0 0 1 26 0q-13 3.200-26 0z" fill="url(#ot)" opacity=".8"/><circle cx="13.500" cy="13.500" r="12.800" fill="none" stroke="#8fb9da" stroke-width=".7" opacity=".75"/><path d="M6.700 5.200c2.600-1.400 5-1.300 7.400-.1l-1.300 6.300c-2.300-1.100-4.600-1.200-7.300.2z" fill="#ee5a24"/><path d="M15 5.700c2.400 1.200 4.800 1.200 7.400-.2l-1.500 6.700c-2.400 1.300-4.700 1.400-7.200.1z" fill="#8fc23c"/><path d="M5.200 12.600c2.600-1.400 5-1.300 7.300-.2l-1.400 6.500c-2.300-1.100-4.600-1.100-7.300.3z" fill="#2f9fe6"/><path d="M13.400 13.100c2.400 1.200 4.700 1.200 7.300-.1l-1.500 6.600c-2.400 1.300-4.700 1.300-7.200.1z" fill="#fbbc1d"/></svg><svg style="position:absolute;left:49.50px;top:470.50px;" width="26.00" height="27.00" viewBox="0 0 26 27"><text x="2.600" y="23.600" font-family="Liberation Sans, sans-serif" font-weight="bold" font-size="37" fill="#35b6f2" stroke="#6fd2fb" stroke-width=".5">e</text><path d="M3.400 22.200C-.6 18 7 6.500 17.500 3.300c3.300-1 5.600-.4 5.800 1.700" fill="none" stroke="#f5c31d" stroke-width="1.800" stroke-linecap="round"/></svg><svg style="position:absolute;left:95.60px;top:474.40px;" width="24.40" height="21.20" viewBox="0 0 24.400 21.200"><path d="M.6 2.200Q.6.6 2.200.6h6.600l1.800 2h11.600q1.600 0 1.600 1.600v15.400H.6z" fill="#f2d77c"/><path d="M1.600 3.800h21v4h-21z" fill="#fdf6da"/><rect x="3" y=".9" width="1.800" height="1.700" fill="#22b14c"/><rect x="9.600" y="2.400" width="1.800" height="1.700" fill="#e0352b"/><rect x="15.600" y="3.900" width="1.800" height="1.700" fill="#2a8fe4"/><path d="M.4 7.400h23.600l-.6 12.800H1z" fill="#f6e29a"/><path d="M4.400 11.600q0-1.200 1.200-1.200h13.200q1.200 0 1.200 1.200l.8 9H3.600z" fill="#8fcdf0" opacity=".92"/><path d="M8.600 15.400h7.200v5.200H8.600z" fill="#f6e29a"/><path d="M4.800 11.200h14.800v1.400H4.800z" fill="#d8f0fc" opacity=".8"/></svg><svg style="position:absolute;left:143.40px;top:476.60px;" width="19.00" height="17.00" viewBox="0 0 19 17"><rect x=".2" y=".2" width="16.600" height="16" fill="#8fc6ea"/><rect x="16.800" y=".8" width="1.800" height="15.600" fill="#6da9d6"/><rect x=".2" y=".2" width="16.600" height="16" fill="none" stroke="#b5dcf4" stroke-width=".5"/><circle cx="8" cy="8.300" r="6.800" fill="#f47b1e"/><circle cx="8" cy="8.300" r="6.500" fill="none" stroke="#f9a95f" stroke-width=".7"/><path d="M5.400 4.300l6.600 4-6.600 4z" fill="#fff"/></svg><div style="position:absolute;left:177.50px;top:469.80px;width:43.50px;height:28.00px;box-sizing:border-box;background:linear-gradient(180deg,rgba(255,255,255,.80),rgba(225,240,252,.66) 48%,rgba(185,220,245,.62) 52%,rgba(200,230,250,.7));border:1px solid rgba(40,70,110,.7);border-radius:2px;box-shadow:inset 0 0 0 1px rgba(255,255,255,.55);"></div><svg style="position:absolute;left:188.25px;top:473.25px;" width="22.00" height="22.00" viewBox="0 0 22 22"><circle cx="11" cy="11" r="11" fill="#fbc116"/><path d="M11 11L1.470 5.500A11 11 0 0 1 20.530 5.500z" fill="#e53f30"/><path d="M11 11L1.470 5.500A11 11 0 0 0 11 22z" fill="#2da84f"/><path d="M11 11L20.530 5.500A11 11 0 0 1 11 22z" fill="#fbc116"/><path d="M1.470 5.500h9.530v5.500z" fill="#e53f30"/><circle cx="11" cy="11" r="5.200" fill="#f4f4f4"/><circle cx="11" cy="11" r="4.100" fill="#4688f1"/></svg><div style="position:absolute;left:223.25px;top:469.80px;width:43.50px;height:28.00px;box-sizing:border-box;background:linear-gradient(180deg,#f4e694 0,#f2c458 45%,#ea9a2e 100%);border:1px solid rgba(60,50,40,.75);border-radius:2px;box-shadow:inset 0 0 0 1px rgba(255,240,190,.55);"></div><svg style="position:absolute;left:234.00px;top:473.25px;" width="23.00" height="23.00" viewBox="0 0 23 23"><circle cx="11" cy="11" r="11" fill="#2e9fdc"/><path d="M4.600 10.800l11.800-4.600c.6-.2 1 .1.800.9l-2 9.500c-.1.600-.5.800-1 .5l-3-2.200-1.500 1.400c-.2.200-.3.300-.6.300l.2-3.100 5.600-5c.2-.2 0-.3-.3-.1l-6.900 4.300-3-.9c-.6-.2-.6-.6.100-.9z" fill="#fff"/><rect x="11.500" y="15.500" width="11.200" height="6.800" rx="1" fill="#e9232c"/><text x="14.800" y="21.200" font-family="Liberation Sans, sans-serif" font-weight="bold" font-size="6" fill="#fff">15</text></svg><span class="t" style="left:822.40px;top:478.00px;font-size:9.60px;color:#fff;transform:scaleX(0.8103);">EN</span><svg style="position:absolute;left:845.00px;top:479.00px;" width="12.00" height="12.00" viewBox="0 0 12 12"><circle cx="6" cy="6.500" r="4.200" fill="none" stroke="#d7b326" stroke-width="2.600"/><circle cx="2.200" cy="2.600" r="1.800" fill="#d7b326"/><circle cx="9.800" cy="2.600" r="1.800" fill="#d7b326"/><circle cx="6" cy="6.500" r="1.800" fill="#1a2a3a"/></svg><svg style="position:absolute;left:863.00px;top:479.00px;" width="12.00" height="12.00" viewBox="0 0 12 12"><circle cx="5.500" cy="6" r="5.400" fill="#2e9fdc"/><rect x="5" y="5.600" width="7" height="6.400" rx="1" fill="#e9232c"/><text x="6.800" y="11" font-family="Liberation Sans, sans-serif" font-weight="bold" font-size="5.600" fill="#fff">5</text></svg><svg style="position:absolute;left:880.60px;top:479.00px;" width="12.00" height="12.00" viewBox="0 0 12 12"><rect x=".6" y=".6" width="1.300" height="11" fill="#fff"/><path d="M2.400 1.200c2-.9 3.400.9 5.200 0v4.600c-1.800.9-3.200-.9-5.200 0z" fill="#fff"/><path d="M8 2.400l3.600 1.300L8 5z" fill="#e8eef5"/></svg><svg style="position:absolute;left:898.60px;top:479.00px;" width="12.00" height="12.00" viewBox="0 0 12 12"><rect x="2.600" y="2.600" width="8.400" height="6.400" fill="none" stroke="#fff" stroke-width="1.200"/><rect x="4.800" y="9.600" width="4.400" height="1.400" fill="#fff"/><rect x=".4" y=".4" width="3.600" height="4" fill="#dfe7f0" stroke="#44587a" stroke-width=".5"/><rect x=".8" y="6.400" width="1.200" height="4" fill="#fff"/></svg><svg style="position:absolute;left:916.00px;top:479.00px;" width="12.00" height="12.00" viewBox="0 0 12 12"><path d="M.8 4.200h2.400L6 1.400v9.200L3.200 7.800H.8z" fill="#fff"/><path d="M7.600 3.600c1.300 1.400 1.300 3.400 0 4.800M9.200 2.200c2.100 2.200 2.100 5.400 0 7.600" fill="none" stroke="#dfe7f0" stroke-width=".9"/></svg><span class="t" style="left:951.00px;top:474.00px;font-size:9.40px;color:#fff;transform:scaleX(0.8181);">14:01</span><span class="t" style="left:940.60px;top:486.00px;font-size:9.40px;color:#fff;transform:scaleX(0.8525);">14.01.2018</span><div style="position:absolute;left:989.60px;top:469.80px;width:10.40px;height:29.20px;background:linear-gradient(90deg,rgba(255,255,255,.35),rgba(255,255,255,.10) 30%,rgba(255,255,255,.05));border-left:1px solid rgba(10,30,60,.7);box-sizing:border-box;"></div></footer>
</body>
</html>
